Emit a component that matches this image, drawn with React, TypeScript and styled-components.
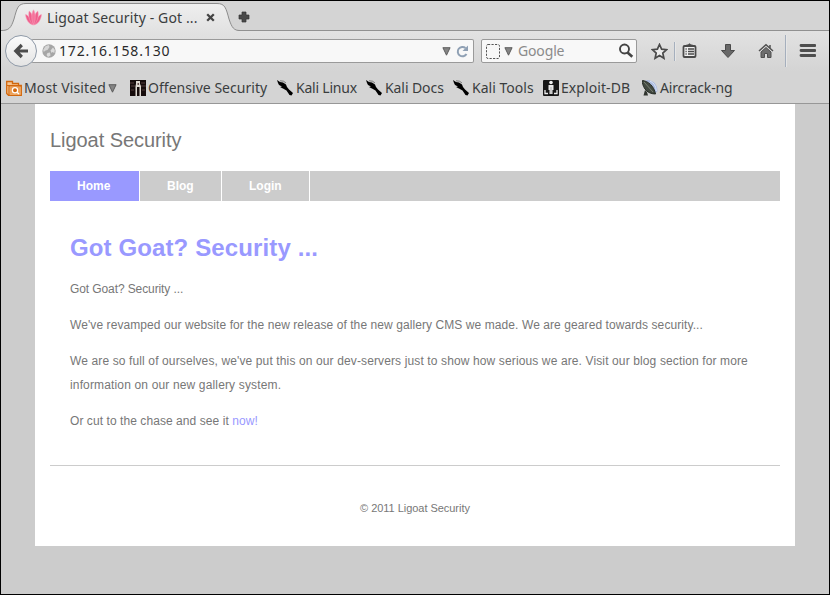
import React from "react";
import styled, { createGlobalStyle } from "styled-components";

const GlobalStyle = createGlobalStyle`
  *, *::before, *::after { box-sizing: border-box; }
  body { margin: 0; background: #000; }
  svg { display: block; flex: none; }
`;

const Window = styled.div`
  width: 830px;
  height: 595px;
  border: 1px solid #000;
  background: #ccc;
  overflow: hidden;
  display: flex;
  flex-direction: column;
`;

const Chrome = styled.header`
  flex: none;
  height: 103px;
  border-bottom: 1px solid #979797;
  background: #d4d4d4;
  font-family: "Noto Sans", "Open Sans", sans-serif;
  color: #3a3d3e;
`;

const TabStrip = styled.div`
  height: 30px;
  display: flex;
  box-shadow: inset 0 -1px 0 #919191;
`;

const Tab = styled.div`
  position: relative;
  width: 234px;
  height: 30px;
  padding: 3px 0 0 24px;
  display: flex;
  align-items: center;
`;

const TabShape = styled.svg`
  position: absolute;
  left: 0;
  top: 0;
`;

const TabContent = styled.div`
  position: relative;
  display: flex;
  align-items: center;
`;

const Label = styled.span<{ $ls?: number }>`
  font-size: 14px;
  letter-spacing: ${(p) => p.$ls ?? 0}px;
  line-height: 20px;
  white-space: pre;
`;

const TabTitle = styled(Label)`
  width: 159px;
  margin-left: 5px;
`;

const NewTab = styled.div`
  padding: 10px 0 0 3px;
`;

const NavBar = styled.div`
  height: 40px;
  display: flex;
  align-items: center;
  padding-left: 4px;
  background: linear-gradient(#e2e2e2, #d4d4d4);
`;

const BackButton = styled.div`
  flex: none;
  position: relative;
  width: 32px;
  height: 32px;
  border: 1px solid #8f9aa8;
  border-radius: 50%;
  background: linear-gradient(#fbfbfb, #e4e4e4);
  display: flex;
  align-items: center;
  justify-content: center;
`;

const Field = styled.div<{ $w: number }>`
  flex: none;
  width: ${(p) => p.$w}px;
  height: 24px;
  border: 1px solid #9a9a9a;
  border-radius: 2px;
  background: #f8f8f8;
  display: flex;
  align-items: center;
`;

const UrlField = styled(Field)`
  margin-left: -6px;
  padding: 0 4px 0 11px;
  border-left: 0;
`;

const SearchField = styled(Field)`
  margin-left: 7px;
  padding: 0 2px 0 4px;
`;

const Url = styled(Label)`
  flex: 1;
  margin-left: 3px;
  color: #2a2a2a;
`;

const Placeholder = styled(Label)`
  flex: 1;
  margin-left: 5px;
  color: #8b8b8b;
`;

const Gap = styled.span<{ $w: number }>`
  flex: none;
  width: ${(p) => p.$w}px;
`;

const Tools = styled.div`
  flex: 1;
  height: 100%;
  display: grid;
  grid-template-columns: 23px 8px 38px 38px 27px 14px 16px;
  align-items: center;
  padding-left: 14px;
`;

const Rule = styled.div<{ $h: number }>`
  width: 2px;
  height: ${(p) => p.$h}px;
  border-left: 1px solid #a5afbd;
  border-right: 1px solid #e6e6e6;
`;

const Bookmarks = styled.div`
  height: 32px;
  display: flex;
  align-items: center;
  padding: 2px 0 0 5px;
`;

const Bookmark = styled.div<{ $w: number }>`
  flex: none;
  width: ${(p) => p.$w}px;
  display: flex;
  align-items: center;
  gap: 2px;
`;

const Site = styled.main`
  width: 760px;
  height: 442px;
  margin-left: 34px;
  padding: 0 15px;
  background: #fff;
  color: #777;
  font-family: "Liberation Sans", Arial, sans-serif;
  font-size: 12px;
`;

const SiteTitle = styled.div`
  height: 67px;
  padding-top: 24px;
  font-size: 20px;
  line-height: 24px;
  letter-spacing: -0.06px;
`;

const Menu = styled.nav`
  height: 30px;
  display: flex;
  background: #ccc;
`;

const MenuItem = styled.a<{ $w: number; $active?: boolean }>`
  width: ${(p) => p.$w}px;
  border-right: 1px solid #fff;
  background: ${(p) => (p.$active ? "#99f" : "#ccc")};
  color: #fff;
  font-weight: bold;
  line-height: 30px;
  padding-left: 27px;
`;

const Article = styled.section`
  height: 265px;
  padding: 29px 20px 0;
  border-bottom: 1px solid #ccc;
`;

const Heading = styled.h1`
  margin: 0 0 12px;
  color: #99f;
  font-size: 24px;
  line-height: 35px;
  height: 35px;
  letter-spacing: 0.12px;
`;

const Paragraph = styled.p`
  margin: 0 0 12px;
  line-height: 24px;
`;

const Line = styled.span<{ $ls: number }>`
  display: block;
  white-space: pre;
  letter-spacing: ${(p) => p.$ls}px;
`;

const Link = styled.a`
  color: #99f;
`;

const Footer = styled.footer`
  padding-top: 32px;
  text-align: center;
  font-size: 11px;
  line-height: 20px;
  letter-spacing: -0.04px;
`;

const Lotus = () => (
  <svg width="17" height="17" viewBox="0 0 17 17">
    <g fill="#ef5f8c" stroke="#f7a3bd" strokeWidth=".5">
      <path d="M8 16C4 15 1 11 .5 5.500C3 6 6 10 8 16Z" />
      <path d="M9 16C13 15 16 11 16.500 5.500C14 6 11 10 9 16Z" />
      <path d="M8 16C4 12 3 6 4.200 2C7 4 8.500 9 8.500 16Z" />
      <path d="M9 16C13 12 14 6 12.800 2C10 4 8.500 9 8.500 16Z" />
      <path d="M8.500 16C5.800 10 6.500 4 8.500 .8C10.500 4 11.200 10 8.500 16Z" fill="#f4749c" />
    </g>
  </svg>
);

const Cross = () => (
  <svg width="9" height="9" viewBox="0 0 9 9">
    <path d="M1.200 1.200L7.800 7.800M7.800 1.200L1.200 7.800" stroke="#444" strokeWidth="2.300" />
  </svg>
);

const Plus = () => (
  <svg width="12" height="12" viewBox="0 0 12 12">
    <path d="M4 1H8V4H11V8H8V11H4V8H1V4H4Z" fill="#4a4a4a" stroke="#333" strokeWidth=".7" />
  </svg>
);

const BackArrow = () => (
  <svg width="16" height="16" viewBox="0 0 16 16">
    <path d="M8.800 2L2.800 8L8.800 14M3 8H15" fill="none" stroke="#4c4c4c" strokeWidth="3.200" />
  </svg>
);

const Globe = () => (
  <svg width="14" height="14" viewBox="0 0 14 14">
    <circle cx="7" cy="7" r="6.700" fill="#a6a6a6" />
    <path d="M1.200 6L3.500 2.200L6.800 1L7.500 3L5.500 6L3.500 6.500L1.800 8Z" fill="#d6d6d6" />
    <path d="M8.500 6.500L11 3.500L12.800 6L12.300 9L10.500 8L9.500 9Z" fill="#dcdcdc" />
    <path d="M5.500 9L8 8.500L8.500 11.500L6 13L4.500 11Z" fill="#dcdcdc" />
  </svg>
);

const Triangle = () => (
  <svg width="9" height="9" viewBox="0 0 9 9">
    <path d="M.9 .7H8.100L4.500 8.200Z" fill="#858585" stroke="#555" strokeWidth=".9" />
  </svg>
);

const Reload = () => (
  <svg width="13" height="13" viewBox="0 0 13 13">
    <path d="M10.500 9A4.700 4.700 0 1 1 9.500 3" fill="none" stroke="#8fa0b4" strokeWidth="2" />
    <path d="M12 .5V6H6.500Z" fill="#8fa0b4" />
  </svg>
);

const EngineBox = () => (
  <svg width="14" height="15" viewBox="0 0 14 15">
    <rect x=".5" y=".5" width="13" height="14" rx="1.500" fill="none" stroke="#555" strokeDasharray="2.200 1.300" />
  </svg>
);

const Magnifier = () => (
  <svg width="16" height="16" viewBox="0 0 16 16">
    <circle cx="6.500" cy="6" r="4.500" fill="none" stroke="#444" strokeWidth="1.900" />
    <path d="M9.500 9.500L14.300 13.800" stroke="#444" strokeWidth="2.600" />
  </svg>
);

const Star = () => (
  <svg width="17" height="17" viewBox="0 0 17 17">
    <path
      d="M8.500 1.500L10.600 6.200L15.600 6.700L11.800 10.100L12.900 15.200L8.500 12.500L4.100 15.200L5.200 10.100L1.400 6.700L6.400 6.200Z"
      fill="#ececec"
      stroke="#4a4a4a"
      strokeWidth="1.700"
    />
  </svg>
);

const Clipboard = () => (
  <svg width="15" height="16" viewBox="0 0 15 16">
    <path d="M4.500 2.500V1.500H6L7.500 .3L9 1.500H10.500V2.500Z" fill="#4a4a4a" />
    <rect x="1.500" y="3" width="12" height="11" rx="1" fill="#f0f0f0" stroke="#4a4a4a" strokeWidth="1.800" />
    <path d="M3.500 6H4.700M6 6H12M3.500 8.500H4.700M6 8.500H12M3.500 11H4.700M6 11H12" stroke="#4a4a4a" strokeWidth="1.300" />
  </svg>
);

const Download = () => (
  <svg width="16" height="16" viewBox="0 0 16 16">
    <path d="M5.500 1.500H10.500V7.500H14.500L8 14.500L1.500 7.500H5.500Z" fill="#686868" stroke="#4a4a4a" />
  </svg>
);

const House = () => (
  <svg width="16" height="16" viewBox="0 0 16 16">
    <path d="M3 9L8 4.500L13 9V14.500H9.500V10.500H6.500V14.500H3Z" fill="#6e6e6e" stroke="#505050" />
    <path d="M1 8L8 1.800L15 8M12 2V5" fill="none" stroke="#505050" strokeWidth="1.500" />
  </svg>
);

const Burger = () => (
  <svg width="17" height="14" viewBox="0 0 17 14">
    <path d="M2 1.500H16M2 6.500H16M2 11.500H16" stroke="#4e4e4e" strokeWidth="2.800" strokeLinecap="round" />
  </svg>
);

const Folder = () => (
  <svg width="16" height="16" viewBox="0 0 16 16">
    <path d="M.7 1.500H6.500V3.500H12.500V5.500H15.300V15.300H2.500L.7 13.500Z" fill="#f6c592" stroke="#d2670c" strokeWidth="1.300" />
    <path d="M1 5.500H12M3 15V6H15" fill="none" stroke="#d2670c" strokeWidth="1.200" />
    <rect x="4" y="7" width="10.500" height="7.500" fill="#eda057" />
    <circle cx="9" cy="10.300" r="2.600" fill="#d2670c" stroke="#fff" strokeWidth="1.200" />
    <path d="M11 12.300L13 14" stroke="#fff" strokeWidth="1.500" />
  </svg>
);

const OffSec = () => (
  <svg width="16" height="16" viewBox="0 0 16 16">
    <rect width="16" height="16" fill="#160c0c" />
    <path d="M0 3H4M1 6H5M11 3H15M11 6H16M1 10H4M12 10H15" stroke="#553c3c" />
    <path d="M6 1H10V4L11 6V16H9.500V7H7V16H5.500V6L6 4Z" fill="#ded8d0" />
    <path d="M7.500 3H9V5H7.500Z" fill="#685050" />
  </svg>
);

const Kali = () => (
  <svg width="17" height="16" viewBox="0 0 17 16">
    <path d="M0 0L3 2L6 2.500L9 4.500L10 7L12 9.500L16 13L14.500 15.500L12.500 15L9.500 10.500L6 8.500L3 7L5 6.500L2 5L1 3Z" fill="#000" />
    <path d="M3 .8Q7 .5 9 3" fill="none" stroke="#555" strokeWidth=".7" />
  </svg>
);

const Exploit = () => (
  <svg width="16" height="16" viewBox="0 0 16 16">
    <rect width="16" height="16" rx="1" fill="#161616" />
    <circle cx="8" cy="2.500" r="1.800" fill="#eee" />
    <path d="M5.500 5H10.500V10H9.500V14H6.500V10H5.500Z" fill="#e8e8e8" />
    <path d="M8 7V14" stroke="#888" strokeWidth=".6" />
    <path d="M2 10V13.500H5M14 10V13.500H11" fill="none" stroke="#eee" strokeWidth="1.300" />
  </svg>
);

const Aircrack = () => (
  <svg width="16" height="16" viewBox="0 0 16 16">
    <path d="M5 0C12 0 15.500 5 15.500 11L13 14C13 8 9 3 3 1Z" fill="#a9b9dd" />
    <path d="M8 1C12 3 14 6 14.300 11" fill="none" stroke="#dce6fa" />
    <path d="M.5 .5C6 1 12 6 13.500 14C9 14 5 12 3 9C1 6 0 3 .5 .5Z" fill="#424941" stroke="#252b25" />
    <path d="M2 2L11 12" stroke="#788073" />
    <path d="M3 10L1.500 15.500H6L5 12Z" fill="#30352f" />
  </svg>
);

const bookmarks = [
  { label: "Offensive Security", icon: <OffSec />, w: 147, ls: 0.03 },
  { label: "Kali Linux", icon: <Kali />, w: 89, ls: -0.22 },
  { label: "Kali Docs", icon: <Kali />, w: 87, ls: -0.08 },
  { label: "Kali Tools", icon: <Kali />, w: 90, ls: 0.03 },
  { label: "Exploit-DB", icon: <Exploit />, w: 99, ls: 0.08 },
  { label: "Aircrack-ng", icon: <Aircrack />, w: 100, ls: -0.15 },
];

export default function App() {
  return (
    <>
      <GlobalStyle />
      <Window>
        <Chrome>
          <TabStrip>
            <Tab>
              <TabShape width="240" height="30" viewBox="0 0 240 30">
                <defs>
                  <linearGradient id="tabFill" x1="0" y1="0" x2="0" y2="1">
                    <stop offset="0" stopColor="#efefef" />
                    <stop offset="1" stopColor="#e2e2e2" />
                  </linearGradient>
                </defs>
                <path
                  d="M0 29.500C8 29.500 10 27 13 18C16 7 17 2.500 25 2.500H216C224 2.500 225 7 228 18C231 27 233 29.500 239 29.500V30H0Z"
                  fill="url(#tabFill)"
                />
                <path
                  d="M0 29.500C8 29.500 10 27 13 18C16 7 17 2.500 25 2.500H216C224 2.500 225 7 228 18C231 27 233 29.500 239 29.500"
                  fill="none"
                  stroke="#8c8c8c"
                />
              </TabShape>
              <TabContent>
                <Lotus />
                <TabTitle $ls={0.12}>Ligoat Security - Got ...</TabTitle>
                <Cross />
              </TabContent>
            </Tab>
            <NewTab>
              <Plus />
            </NewTab>
          </TabStrip>
          <NavBar>
            <BackButton>
              <BackArrow />
            </BackButton>
            <UrlField $w={443}>
              <Globe />
              <Url $ls={0.86}>172.16.158.130</Url>
              <Triangle />
              <Gap $w={5} />
              <Reload />
            </UrlField>
            <SearchField $w={156}>
              <EngineBox />
              <Gap $w={4} />
              <Triangle />
              <Placeholder $ls={-0.15}>Google</Placeholder>
              <Magnifier />
            </SearchField>
            <Tools>
              <Star />
              <Rule $h={19} />
              <Clipboard />
              <Download />
              <House />
              <Rule $h={32} />
              <Burger />
            </Tools>
          </NavBar>
          <Bookmarks>
            <Bookmark $w={124}>
              <Folder />
              <Label $ls={0.12}>Most Visited</Label>
              <Triangle />
            </Bookmark>
            {bookmarks.map((b) => (
              <Bookmark key={b.label} $w={b.w}>
                {b.icon}
                <Label $ls={b.ls}>{b.label}</Label>
              </Bookmark>
            ))}
          </Bookmarks>
        </Chrome>
        <Site>
          <SiteTitle>Ligoat Security</SiteTitle>
          <Menu>
            <MenuItem $w={90} $active>Home</MenuItem>
            <MenuItem $w={82}>Blog</MenuItem>
            <MenuItem $w={88}>Login</MenuItem>
          </Menu>
          <Article>
            <Heading>Got Goat? Security ...</Heading>
            <Paragraph>
              <Line $ls={-0.1}>Got Goat? Security ...</Line>
            </Paragraph>
            <Paragraph>
              <Line $ls={0.08}>
                We've revamped our website for the new release of the new gallery CMS we made. We are geared towards security...
              </Line>
            </Paragraph>
            <Paragraph>
              <Line $ls={0.124}>
                We are so full of ourselves, we've put this on our dev-servers just to show how serious we are. Visit our blog section for more
              </Line>
              <Line $ls={0.15}>information on our new gallery system.</Line>
            </Paragraph>
            <Paragraph>
              <Line $ls={0.07}>
                Or cut to the chase and see it <Link>now!</Link>
              </Line>
            </Paragraph>
          </Article>
          <Footer>© 2011 Ligoat Security</Footer>
        </Site>
      </Window>
    </>
  );
}
